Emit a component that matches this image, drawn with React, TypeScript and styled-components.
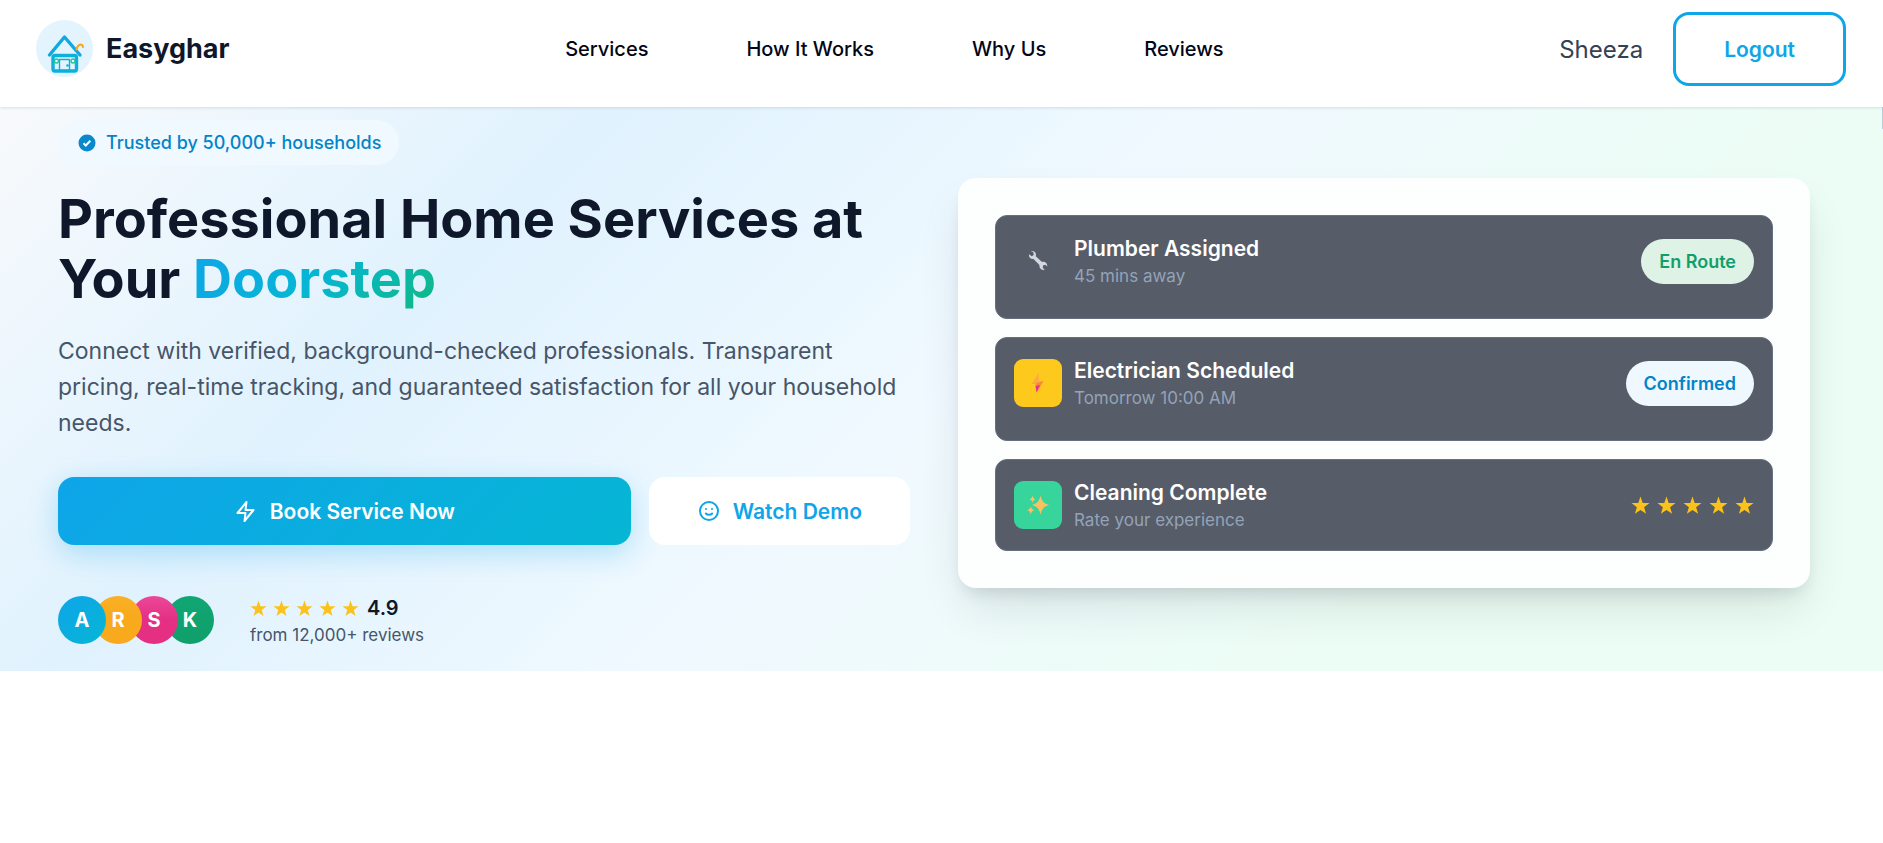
import React from "react";
import styled, { createGlobalStyle, css } from "styled-components";

const GlobalStyle = createGlobalStyle`
  *, *::before, *::after { box-sizing: border-box; }
  body {
    margin: 0;
    background: #ffffff;
    color: #0f172a;
    font-family: Inter, "Liberation Sans", sans-serif;
    -webkit-font-smoothing: antialiased;
  }
  button { font-family: inherit; cursor: pointer; }
  a { color: inherit; text-decoration: none; }
`;

const Header = styled.header`
  position: relative;
  z-index: 1;
  display: flex;
  justify-content: space-between;
  align-items: center;
  padding: 12px 37px 21px 36px;
  background: #ffffff;
  box-shadow: 0 1px 3px rgba(15, 23, 42, 0.12);
`;

const Brand = styled.a`
  display: flex;
  align-items: center;
  gap: 13px;
  font-size: 27px;
  line-height: 32px;
  font-weight: 700;
`;

const Nav = styled.nav`
  display: flex;
  gap: 98px;
  font-size: 20px;
  line-height: 28px;
  font-weight: 500;
  color: #020617;
`;

const Account = styled.div`
  display: flex;
  align-items: center;
  justify-content: flex-end;
  gap: 30px;
  font-size: 24px;
  color: #334155;
`;

const LogoutButton = styled.button`
  height: 74px;
  padding: 0 48px;
  border: 3px solid #0ea5e9;
  border-radius: 16px;
  background: #ffffff;
  color: #0ea5e9;
  font-size: 21px;
  font-weight: 600;
`;

const Hero = styled.main`
  position: relative;
  display: grid;
  grid-template-columns: 1fr 1fr;
  gap: 48px;
  align-items: center;
  padding: 13px 73px 25px 58px;
  background: linear-gradient(135deg, #f8fafc 0%, #e0f2fe 25%, #f0f9ff 50%, #ecfdf5 75%, #ecfdf5 100%);
`;

const ScrollThumb = styled.span`
  position: absolute;
  top: 0;
  right: 0;
  width: 1px;
  height: 22px;
  background: #bccbd8;
`;

const Intro = styled.section`
  display: flex;
  flex-direction: column;
  align-items: flex-start;
  min-width: 0;
`;

const TrustBadge = styled.div`
  display: flex;
  align-items: center;
  gap: 10px;
  height: 45px;
  padding: 0 18px 0 20px;
  border-radius: 23px;
  background: #f0f9ff;
  color: #0284c7;
  font-size: 18px;
  font-weight: 500;
`;

const Title = styled.h1`
  margin: 24px 0 0;
  font-size: 54px;
  line-height: 60px;
  font-weight: 700;
`;

const Accent = styled.span`
  display: inline-block;
  background: linear-gradient(135deg, #0ea5e9 0%, #06b6d4 50%, #10b981 100%);
  background-clip: text;
  -webkit-background-clip: text;
  color: transparent;
`;

const Lead = styled.p`
  margin: 24px 0 0;
  color: #475569;
  font-size: 23px;
  line-height: 36px;
`;

const Actions = styled.div`
  display: flex;
  gap: 18px;
  width: 100%;
  margin-top: 36px;
`;

const ActionButton = styled.button<{ $primary?: boolean }>`
  display: flex;
  align-items: center;
  justify-content: center;
  gap: 12px;
  height: 68px;
  border: 0;
  border-radius: 16px;
  font-size: 21px;
  font-weight: 600;
  ${({ $primary }) =>
    $primary
      ? css`
          flex: 1;
          background: linear-gradient(135deg, #0ea5e9 0%, #06b6d4 100%);
          color: #ffffff;
          box-shadow: 0 8px 28px rgba(14, 165, 233, 0.28);
        `
      : css`
          padding: 0 48px;
          background: #ffffff;
          color: #0ea5e9;
        `}
`;

const Proof = styled.div`
  display: flex;
  align-items: center;
  gap: 36px;
  margin-top: 49px;
`;

const Avatars = styled.div`
  display: flex;
  isolation: isolate;
`;

const Avatar = styled.span<{ $fill: string; $layer: number }>`
  position: relative;
  z-index: ${({ $layer }) => $layer};
  display: grid;
  place-items: center;
  width: 48px;
  height: 48px;
  border-radius: 50%;
  background: ${({ $fill }) => $fill};
  color: #ffffff;
  font-size: 20px;
  font-weight: 700;
  & + & { margin-left: -12px; }
`;

const Rating = styled.div`
  display: flex;
  flex-direction: column;
  gap: 5px;
  padding-top: 3px;
`;

const Score = styled.div`
  display: flex;
  align-items: center;
  gap: 8px;
  font-size: 20px;
  line-height: 22px;
  font-weight: 600;
`;

const Note = styled.div`
  color: #475569;
  font-size: 17px;
  line-height: 22px;
`;

const StarRow = styled.span<{ $gap: number }>`
  display: flex;
  gap: ${({ $gap }) => $gap}px;
`;

const StatusCard = styled.section`
  display: flex;
  flex-direction: column;
  gap: 18px;
  min-width: 0;
  padding: 37px;
  border-radius: 18px;
  background: #fdfefe;
  box-shadow: 0 24px 48px -8px rgba(15, 23, 42, 0.12), 0 10px 16px -6px rgba(15, 23, 42, 0.12);
`;

const Job = styled.article<{ $tall?: boolean }>`
  display: flex;
  align-items: flex-start;
  gap: 12px;
  min-height: ${({ $tall }) => ($tall ? 104 : 92)}px;
  padding: 19px 18px 0;
  border: 1px solid #667080;
  border-radius: 12px;
  background: #565c68;
`;

const JobIcon = styled.span<{ $fill: string }>`
  display: grid;
  place-items: center;
  width: 48px;
  height: 48px;
  margin-top: 2px;
  border-radius: 9px;
  background: ${({ $fill }) => $fill};
`;

const JobText = styled.div`
  flex: 1;
  min-width: 0;
`;

const JobTitle = styled.h2`
  margin: 0;
  color: #ffffff;
  font-size: 21px;
  line-height: 28px;
  font-weight: 600;
`;

const JobNote = styled.p`
  margin: 0;
  color: #94a3b8;
  font-size: 17px;
  line-height: 26px;
`;

const JobEnd = styled.div`
  display: flex;
  align-items: center;
  height: 53px;
`;

const Pill = styled.span<{ $fill: string; $ink: string }>`
  display: flex;
  align-items: center;
  height: 45px;
  padding: 0 18px;
  border-radius: 23px;
  background: ${({ $fill }) => $fill};
  color: ${({ $ink }) => $ink};
  font-size: 18px;
  font-weight: 600;
`;

const HouseLogo = () => (
  <svg width="57" height="58" viewBox="5 5 57 58" fill="none" aria-hidden="true" strokeLinecap="round" strokeLinejoin="round">
    <circle cx="33.5" cy="33.5" r="28.5" fill="#e4f4fe" />
    <path d="M18.5 40 33.5 22 49 40" stroke="#0eaae2" strokeWidth="3.4" />
    <path d="M45.500 34.500C46.500 29 51.500 28 52 32" stroke="#f9a825" strokeWidth="2.2" />
    <rect x="22" y="40.500" width="23.500" height="15.500" rx="2" stroke="#0bb0dc" strokeWidth="3.4" />
    <rect x="28.500" y="44.500" width="10" height="11" stroke="#0bb0dc" strokeWidth="1.4" />
    <circle cx="25.500" cy="46" r="2" stroke="#22c59b" strokeWidth="1.4" />
    <circle cx="42" cy="46" r="2" stroke="#22c59b" strokeWidth="1.4" />
    <circle cx="36.500" cy="50.500" r="1.3" fill="#0bb0dc" />
  </svg>
);

const CheckIcon = () => (
  <svg width="18" height="18" viewBox="0 0 18 18" aria-hidden="true">
    <circle cx="9" cy="9" r="8.500" fill="#0a88cc" />
    <path d="m5.500 9.200 2.300 2.300 4.500-4.700" fill="none" stroke="#fff" strokeWidth="2" />
  </svg>
);

const BoltIcon = () => (
  <svg width="24" height="24" viewBox="0 0 24 24" fill="none" stroke="currentColor" strokeWidth="2" strokeLinejoin="round" aria-hidden="true">
    <path d="M12.500 3 3.500 14h8l-1 8 9-11h-8l1-8z" />
  </svg>
);

const SmileIcon = () => (
  <svg width="24" height="24" viewBox="0 0 24 24" fill="none" stroke="currentColor" strokeWidth="2" strokeLinecap="round" aria-hidden="true">
    <circle cx="12" cy="12" r="9" />
    <path d="M8.800 14.500c1.500 1.800 4.900 1.800 6.400 0M9 10h.010M15 10h.010" />
  </svg>
);

const Star = ({ size }: { size: number }) => (
  <svg width={size} height={size} viewBox="0 0 20 20" fill="#fbc21b" aria-hidden="true">
    <path d="m10 .5 2.300 6.800 7.200.100-5.700 4.400 2.100 7-5.900-4.100-5.900 4.100 2.100-7L.5 7.400l7.200-.1z" />
  </svg>
);

const Stars = ({ size, gap }: { size: number; gap: number }) => (
  <StarRow $gap={gap} role="img" aria-label="5 stars">
    {[0, 1, 2, 3, 4].map((n) => (
      <Star key={n} size={size} />
    ))}
  </StarRow>
);

const WrenchGlyph = () => (
  <svg width="22" height="22" viewBox="0 0 22 22" aria-hidden="true">
    <path
      d="M2 4.300 4.700 6.300 6.700 5 6.300 2 4 1.300C6.500.5 9 2 9 5L8.800 6.300 15 12C17.800 11 20.500 13 20.300 16.500L18.300 14.800 16 15.500 15.800 18 17.800 19.800C14.500 20.500 12 18 12.400 15L6.500 9C4 9.500 1.500 7.500 2 4.300Z"
      fill="#d5d7df"
    />
  </svg>
);

const BoltGlyph = () => (
  <svg width="22" height="22" viewBox="0 0 22 22" aria-hidden="true">
    <path d="M11.500 1 4.500 12 10 12 16.500 9 12 9Z" fill="#fbab40" />
    <path d="M8.500 11.500 16.500 9 9.800 20.500Z" fill="#f58a3c" />
    <path d="M8.500 14 13 13 9.500 20.500Z" fill="#ec2f8c" />
  </svg>
);

const SparkleGlyph = () => (
  <svg width="24" height="24" viewBox="0 0 24 24" fill="#fbc062" aria-hidden="true">
    <path d="M14.500 2.500c1.400 5.800 3 7.800 8.500 9.500-5.500 1.700-7.100 3.700-8.500 9.500-1.400-5.800-3-7.800-8.500-9.500 5.500-1.700 7.100-3.700 8.500-9.500Z" />
    <path d="M6.500 2.500c.5 2.200 1.200 3 3.200 3.700-2 .7-2.700 1.500-3.200 3.700-.5-2.200-1.200-3-3.200-3.700 2-.7 2.700-1.500 3.200-3.700ZM4.800 13.200c.6 2.400 1.400 3.300 3.800 4-2.400.7-3.200 1.600-3.800 4-.6-2.400-1.400-3.300-3.800-4 2.400-.7 3.200-1.600 3.800-4Z" />
  </svg>
);

export default function App() {
  return (
    <>
      <GlobalStyle />
      <Header>
        <Brand href="#">
          <HouseLogo />
          Easyghar
        </Brand>
        <Nav>
          <a href="#services">Services</a>
          <a href="#how">How It Works</a>
          <a href="#why">Why Us</a>
          <a href="#reviews">Reviews</a>
        </Nav>
        <Account>
          <span>Sheeza</span>
          <LogoutButton type="button">Logout</LogoutButton>
        </Account>
      </Header>
      <Hero>
        <ScrollThumb />
        <Intro>
          <TrustBadge>
            <CheckIcon />
            Trusted by 50,000+ households
          </TrustBadge>
          <Title>
            Professional Home Services at Your <Accent>Doorstep</Accent>
          </Title>
          <Lead>
            Connect with verified, background-checked professionals. Transparent pricing, real-time tracking, and
            guaranteed satisfaction for all your household needs.
          </Lead>
          <Actions>
            <ActionButton type="button" $primary>
              <BoltIcon />
              Book Service Now
            </ActionButton>
            <ActionButton type="button">
              <SmileIcon />
              Watch Demo
            </ActionButton>
          </Actions>
          <Proof>
            <Avatars>
              <Avatar $layer={4} $fill="linear-gradient(135deg, #0ea5e9, #06b6d4)">A</Avatar>
              <Avatar $layer={3} $fill="linear-gradient(180deg, #fbb024, #f8aa1c 40%)">R</Avatar>
              <Avatar $layer={2} $fill="linear-gradient(180deg, #ec4899, #e42f83 50%)">S</Avatar>
              <Avatar $layer={1} $fill="linear-gradient(180deg, #10a674, #0f9f6a)">K</Avatar>
            </Avatars>
            <Rating>
              <Score>
                <Stars size={17} gap={6} />
                4.9
              </Score>
              <Note>from 12,000+ reviews</Note>
            </Rating>
          </Proof>
        </Intro>
        <StatusCard>
          <Job $tall>
            <JobIcon $fill="transparent">
              <WrenchGlyph />
            </JobIcon>
            <JobText>
              <JobTitle>Plumber Assigned</JobTitle>
              <JobNote>45 mins away</JobNote>
            </JobText>
            <JobEnd>
              <Pill $fill="#def3e6" $ink="#129e6b">En Route</Pill>
            </JobEnd>
          </Job>
          <Job $tall>
            <JobIcon $fill="#fcc91c">
              <BoltGlyph />
            </JobIcon>
            <JobText>
              <JobTitle>Electrician Scheduled</JobTitle>
              <JobNote>Tomorrow 10:00 AM</JobNote>
            </JobText>
            <JobEnd>
              <Pill $fill="#eff8ff" $ink="#0284c7">Confirmed</Pill>
            </JobEnd>
          </Job>
          <Job>
            <JobIcon $fill="#37d49b">
              <SparkleGlyph />
            </JobIcon>
            <JobText>
              <JobTitle>Cleaning Complete</JobTitle>
              <JobNote>Rate your experience</JobNote>
            </JobText>
            <JobEnd>
              <Stars size={19} gap={7} />
            </JobEnd>
          </Job>
        </StatusCard>
      </Hero>
    </>
  );
}
